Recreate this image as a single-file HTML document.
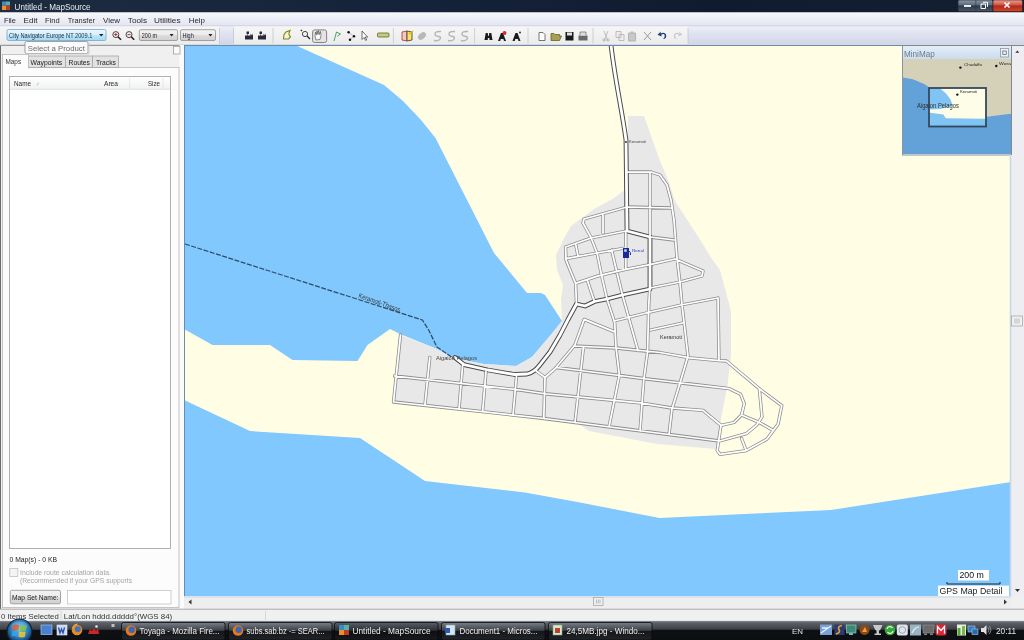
<!DOCTYPE html>
<html><head><meta charset="utf-8">
<style>
*{margin:0;padding:0}
html,body{width:1024px;height:640px;overflow:hidden;background:#f0f0f0}
svg{display:block;filter:blur(0.35px);font-family:"Liberation Sans",sans-serif}
</style></head><body>
<svg width="1024" height="640" viewBox="0 0 1024 640">
<rect width="1024" height="640" fill="#f0f0f0"/>
<defs><clipPath id="mc"><rect x="184" y="45" width="827" height="551"/></clipPath></defs>
<g clip-path="url(#mc)">
<rect x="184" y="45" width="827" height="551" fill="#80c8fe" />
<polygon points="295,45 1011,45 1011,482 831,510 659.5,518 580,502.5 525,492.5 425,481 360,438 250,431 184,400 184,329 212.5,345 270,345 292.5,360 357.5,361 367.5,345 390,329 400,334 437,349 453,358 484,364 516,366 532,357 552,333.5 562,321 545,295 541,293 527,293 494,253 435.5,138 421,120 403,101 384,85" fill="#fffee5"/>
<polygon points="628,116 644,116 660,161 667,177 675,201 699,238 712,259 720,270 731,311 731,356 727.5,385 721,418.7 718,447 716,449 657,444 589,431 579,424 540,418 393.5,402 400.5,335 437,349 453,358 484,364 516,366 532,357 552,333.5 562,321 561,300 563,285 557,270 556,255 563,240 571,226 594,209 613.7,198.3 624.4,190.3 628,190" fill="#e8e8e8"/>
<path d="M185,244 L422.4,320 L428.7,330 L436.9,346.9 L455.6,359.8" fill="none" stroke="#2c4a68" stroke-width="1.2" stroke-dasharray="5,1.5"/>
<g fill="none" stroke-linejoin="round" stroke-linecap="round">
<path d="M627,172 L651,172 L660,175 L667,185 L671,200 L674,220 L677,258 L680,283 L682,305 L684,322 L688,356 L680,383 L672,409 L669,434.5 M650,172 L650,237 M671,208 L627,207 L584,219 L583,223 L591,237.5 L597,253 L601.5,275 L607,299 L614.7,322.5 L616,347.5 L619.4,375 L609,427 M603,215 L603,233 M626,231 L591,238 L565.6,247 L566,260 L575.6,283.4 L576.5,304 M575.8,245 L578,256 M566,258.6 L597,253 L625,248 M611.6,250 L618.75,280 L622.5,295.2 L628.75,317.8 L638,350.6 M575.6,283.4 L599,275.6 L625.6,269.4 L649.8,264.7 L675,259 L703,271 L702,276 L680,282 L650,288 M625.8,231 L625.8,269 M650,237 L674,240 M587.3,280.3 L594.4,301.4 M614,321 L646,313 L681,305 L718,298 L719,360.6 M650.6,330 L682.5,323 M649.8,288 L648.75,305 L647.5,352.5 L643.75,380 L640,431 M574,346 L616,348 L660,352.5 L690,357.8 L719,360.6 L726.5,361 L759.3,388.7 L781.8,405.6 L778,424.3 L766.8,439.3 L746.2,450.6 L720,454.3 L717.2,450.6 L721,425.3 M394.7,376 L520,390 L545,393.75 L640,402.8 L671.9,408 L690,409.3 L703,410.3 L710.6,416.8 L721,425.3 L734,422.5 L741.5,415 L744.3,403.7 L740.6,394.3 L729.4,388.7 L690,384 L645,378.75 L616,375 L556,367.5 M393.5,402 L540,418 L719.7,441 L746.2,433.7 L756.5,425.3 L762,416.8 L759.3,388.7 M741.5,415 L759.3,422.5 L772.5,430 M741.5,438.4 L746.2,450.6 M400.5,335 L393.5,402 M429.8,357.4 L425,404.3 M462.6,365.6 L459,409 M486,371.5 L482.6,411.7 M516.5,376 L513,415 M535,370 L545,377.5 L543.75,418.5 M583.4,347.5 L575,422.5 M584.2,319.4 L614.7,331.9 M584.2,319.4 L574.8,345.2 L555,368.75 L545,377.5" stroke="#8e8e8e" stroke-width="3.3"/>
<path d="M611,45 C615,80 622,110 626,140 L627,231 L650,237 L650,289 L622.5,295 L607,299 L594.5,301.5 L585,306 L576.5,304 L568,319.5 L560,335 L550,352 L539,366 C535,371 532,373 527,374 L514.5,374.5 L488,370 L464,364.6 L455,357.5" stroke="#4a4a4a" stroke-width="4.8"/>
<path d="M627,172 L651,172 L660,175 L667,185 L671,200 L674,220 L677,258 L680,283 L682,305 L684,322 L688,356 L680,383 L672,409 L669,434.5 M650,172 L650,237 M671,208 L627,207 L584,219 L583,223 L591,237.5 L597,253 L601.5,275 L607,299 L614.7,322.5 L616,347.5 L619.4,375 L609,427 M603,215 L603,233 M626,231 L591,238 L565.6,247 L566,260 L575.6,283.4 L576.5,304 M575.8,245 L578,256 M566,258.6 L597,253 L625,248 M611.6,250 L618.75,280 L622.5,295.2 L628.75,317.8 L638,350.6 M575.6,283.4 L599,275.6 L625.6,269.4 L649.8,264.7 L675,259 L703,271 L702,276 L680,282 L650,288 M625.8,231 L625.8,269 M650,237 L674,240 M587.3,280.3 L594.4,301.4 M614,321 L646,313 L681,305 L718,298 L719,360.6 M650.6,330 L682.5,323 M649.8,288 L648.75,305 L647.5,352.5 L643.75,380 L640,431 M574,346 L616,348 L660,352.5 L690,357.8 L719,360.6 L726.5,361 L759.3,388.7 L781.8,405.6 L778,424.3 L766.8,439.3 L746.2,450.6 L720,454.3 L717.2,450.6 L721,425.3 M394.7,376 L520,390 L545,393.75 L640,402.8 L671.9,408 L690,409.3 L703,410.3 L710.6,416.8 L721,425.3 L734,422.5 L741.5,415 L744.3,403.7 L740.6,394.3 L729.4,388.7 L690,384 L645,378.75 L616,375 L556,367.5 M393.5,402 L540,418 L719.7,441 L746.2,433.7 L756.5,425.3 L762,416.8 L759.3,388.7 M741.5,415 L759.3,422.5 L772.5,430 M741.5,438.4 L746.2,450.6 M400.5,335 L393.5,402 M429.8,357.4 L425,404.3 M462.6,365.6 L459,409 M486,371.5 L482.6,411.7 M516.5,376 L513,415 M535,370 L545,377.5 L543.75,418.5 M583.4,347.5 L575,422.5 M584.2,319.4 L614.7,331.9 M584.2,319.4 L574.8,345.2 L555,368.75 L545,377.5" stroke="#fff" stroke-width="1.75"/>
<path d="M611,45 C615,80 622,110 626,140 L627,231 L650,237 L650,289 L622.5,295 L607,299 L594.5,301.5 L585,306 L576.5,304 L568,319.5 L560,335 L550,352 L539,366 C535,371 532,373 527,374 L514.5,374.5 L488,370 L464,364.6 L455,357.5" stroke="#fff" stroke-width="2.8"/>
</g>
<text x="358" y="297.5" font-size="7" fill="#3a3a3a" font-weight="normal" textLength="44" lengthAdjust="spacingAndGlyphs" transform="rotate(19.5 358 297.5)">Keramoti-Thasos</text>
<text x="436" y="359.5" font-size="6" fill="#444" font-weight="normal" textLength="41" lengthAdjust="spacingAndGlyphs" >Aigaion Pelagos</text>
<text x="660" y="339" font-size="6" fill="#333" font-weight="normal" textLength="22" lengthAdjust="spacingAndGlyphs" >Keramoti</text>
<text x="629" y="143" font-size="4" fill="#444" font-weight="normal" textLength="17" lengthAdjust="spacingAndGlyphs" >Keramoti</text>
<circle cx="626" cy="142" r="0.9" fill="#222"/>
<text x="632" y="252" font-size="4" fill="#3040c0" font-weight="normal" textLength="12" lengthAdjust="spacingAndGlyphs" >Renal</text>
<path d="M623,248 h6 v10 h-6 z" fill="#1a2a9a"/><rect x="624.2" y="249.3" width="2.5" height="2.5" fill="#cde"/><path d="M629,251 q2,1 1.5,4" stroke="#1a2a9a" stroke-width="1" fill="none"/>
</g>
<path d="M184.5,45.5 V596.5 M184,45.5 H1011" stroke="#6a8cae" stroke-width="1"/>
<rect x="958" y="570" width="31" height="10.5" fill="#fff" />
<text x="959.4" y="578.1" font-size="8.6" fill="#111" font-weight="normal" textLength="24.4" lengthAdjust="spacingAndGlyphs" >200 m</text>
<path d="M947,582 V584 H1000 V582" fill="none" stroke="#222" stroke-width="1"/>
<rect x="938" y="585.6" width="71" height="10.5" fill="#fff" />
<text x="939.4" y="593.8" font-size="8.5" fill="#222" font-weight="normal" textLength="63" lengthAdjust="spacingAndGlyphs" >GPS Map Detail</text>
<rect x="902.5" y="45.5" width="109" height="109.5" fill="#f4f6f8" stroke="#8a949e" stroke-width="1" />
<defs><linearGradient id="mmt" x1="0" y1="0" x2="0" y2="1"><stop offset="0" stop-color="#e4eef8"/><stop offset="1" stop-color="#cbdcec"/></linearGradient></defs>
<rect x="903" y="46" width="108" height="13" fill="url(#mmt)" />
<text x="904" y="56.5" font-size="8.6" fill="#6c7c8e" font-weight="normal" textLength="30.7" lengthAdjust="spacingAndGlyphs" >MiniMap</text>
<rect x="1000.5" y="48.5" width="8" height="8.5" fill="#eef2f6" stroke="#8898a8" stroke-width="0.8" />
<rect x="1002.8" y="51" width="3.4" height="3.4" fill="none" stroke="#556" stroke-width="0.7" />
<defs><clipPath id="mmc"><rect x="903" y="59" width="108" height="95"/></clipPath></defs>
<g clip-path="url(#mmc)">
<rect x="903" y="59" width="108" height="95" fill="#62a2d8" />
<polygon points="903,59 1011,59 1011,113.8 996.6,115.4 985.3,117 945,118.6 942.7,114.6 930,113.8 929,87.2 924.2,84 912.9,79.2 903,77.5" fill="#d5d1b8"/>
<rect x="929" y="88" width="57" height="38" fill="#80c4f4" />
<polygon points="939.5,88 986,88 986,118.7 945.8,118.3 943.4,114.4 930,112.8 929,109.5 940,108.9 952.8,105.8 950.5,99.5 945.8,93.3" fill="#fdfde8"/>
</g>
<rect x="929" y="88" width="57" height="38.5" fill="none" stroke="#34485c" stroke-width="1.8" />
<circle cx="960.4" cy="67.6" r="1.2" fill="#111"/>
<text x="964" y="66" font-size="4" fill="#222" font-weight="normal" textLength="18" lengthAdjust="spacingAndGlyphs" >Chudaffo</text>
<circle cx="996.3" cy="66" r="1.2" fill="#111"/>
<text x="999" y="65" font-size="4" fill="#222" font-weight="normal" textLength="12" lengthAdjust="spacingAndGlyphs" >Wora</text>
<circle cx="957.3" cy="94.6" r="1.2" fill="#111"/>
<text x="960" y="93" font-size="4" fill="#222" font-weight="normal" textLength="17" lengthAdjust="spacingAndGlyphs" >Keramoti</text>
<text x="917" y="108" font-size="7" fill="#303030" font-weight="normal" textLength="41.8" lengthAdjust="spacingAndGlyphs" >Aigaion Pelagos</text>
<rect x="1011" y="45" width="13" height="552" fill="#eeedf2" />
<path d="M1010.5,155 V597" stroke="#c6d6e6" stroke-width="1.5"/>
<path d="M1015.3,52.8 l2,-2.4 l2,2.4 z" fill="#333"/>
<path d="M1011.5,45.5 V155 M902.5,45.5 H1024" stroke="#808890" stroke-width="1"/>
<path d="M1015,589 l2.5,3 l2.5,-3 z" fill="#333"/>
<rect x="1011.5" y="316" width="11" height="10" fill="#f0f0f0" stroke="#a8a8a8" stroke-width="0.8" />
<path d="M1015,318.5 v5 M1017,318.5 v5 M1019,318.5 v5" stroke="#999" stroke-width="0.6"/>
<rect x="184" y="596.5" width="827" height="12" fill="#eeeeee" />
<path d="M184,597 H1011" stroke="#c6d6e6" stroke-width="1"/>
<path d="M191.5,599.5 l-3,2.5 l3,2.5 z" fill="#333"/>
<path d="M1004,599.5 l3,2.5 l-3,2.5 z" fill="#333"/>
<rect x="593.5" y="597.5" width="9.5" height="8" fill="#f0f0f0" stroke="#a8a8a8" stroke-width="0.8" />
<path d="M596.5,599.5 v4 M598.3,599.5 v4 M600,599.5 v4" stroke="#999" stroke-width="0.6"/>
<defs><linearGradient id="tg" x1="0" y1="0" x2="1" y2="0"><stop offset="0" stop-color="#1e2c40"/><stop offset="0.4" stop-color="#15233a"/><stop offset="0.7" stop-color="#0f1b2e"/><stop offset="1" stop-color="#142032"/></linearGradient></defs>
<rect x="0" y="0" width="1024" height="12.5" fill="url(#tg)" />
<rect x="2" y="1.5" width="4" height="4" fill="#3a8ac8" />
<rect x="6" y="1.5" width="4" height="4" fill="#58b0a8" />
<rect x="2" y="5.5" width="4" height="4.5" fill="#e89030" />
<rect x="6" y="5.5" width="4" height="4.5" fill="#c03a28" />
<text x="14.6" y="9.7" font-size="8.5" fill="#e6eaf2" font-weight="normal" textLength="76" lengthAdjust="spacingAndGlyphs" >Untitled - MapSource</text>
<defs><linearGradient id="wb" x1="0" y1="0" x2="0" y2="1"><stop offset="0" stop-color="#8a96a4"/><stop offset="0.45" stop-color="#5a6878"/><stop offset="0.5" stop-color="#2a3848"/><stop offset="1" stop-color="#4a5868"/></linearGradient><linearGradient id="cb" x1="0" y1="0" x2="0" y2="1"><stop offset="0" stop-color="#e8a090"/><stop offset="0.45" stop-color="#d05040"/><stop offset="0.5" stop-color="#b02818"/><stop offset="1" stop-color="#d04830"/></linearGradient></defs>
<rect x="958" y="0" width="35" height="11.5" fill="url(#wb)" stroke="#1a2430" stroke-width="0.6" rx="1.5" />
<path d="M975.8,0 V11.5" stroke="#2a3440" stroke-width="0.6"/>
<rect x="993" y="0" width="29.5" height="11.5" fill="url(#cb)" stroke="#3a1a18" stroke-width="0.6" rx="1.5" />
<path d="M964,6 h7" stroke="#fff" stroke-width="1.8"/>
<path d="M981,4 h4.5 v4.5 h-4.5 z M983,2.3 h4.5 v4.5" fill="none" stroke="#fff" stroke-width="1"/>
<path d="M1004.5,2.5 l5,5 M1009.5,2.5 l-5,5" stroke="#fff" stroke-width="1.6"/>
<defs><linearGradient id="mg" x1="0" y1="0" x2="0" y2="1"><stop offset="0" stop-color="#f8f9fc"/><stop offset="0.5" stop-color="#eceef7"/><stop offset="1" stop-color="#e2e5f1"/></linearGradient></defs>
<rect x="0" y="12.5" width="1024" height="13.5" fill="url(#mg)" />
<path d="M0,26 H1024" stroke="#c8cad4" stroke-width="1"/>
<text x="3.9" y="22.6" font-size="8" fill="#2a2a2a" font-weight="normal" textLength="12" lengthAdjust="spacingAndGlyphs" >File</text>
<text x="23.6" y="22.6" font-size="8" fill="#2a2a2a" font-weight="normal" textLength="14" lengthAdjust="spacingAndGlyphs" >Edit</text>
<text x="45" y="22.6" font-size="8" fill="#2a2a2a" font-weight="normal" textLength="14.7" lengthAdjust="spacingAndGlyphs" >Find</text>
<text x="67.7" y="22.6" font-size="8" fill="#2a2a2a" font-weight="normal" textLength="27.3" lengthAdjust="spacingAndGlyphs" >Transfer</text>
<text x="103" y="22.6" font-size="8" fill="#2a2a2a" font-weight="normal" textLength="17" lengthAdjust="spacingAndGlyphs" >View</text>
<text x="127.8" y="22.6" font-size="8" fill="#2a2a2a" font-weight="normal" textLength="19.2" lengthAdjust="spacingAndGlyphs" >Tools</text>
<text x="154" y="22.6" font-size="8" fill="#2a2a2a" font-weight="normal" textLength="26.5" lengthAdjust="spacingAndGlyphs" >Utilities</text>
<text x="188.7" y="22.6" font-size="8" fill="#2a2a2a" font-weight="normal" textLength="16.3" lengthAdjust="spacingAndGlyphs" >Help</text>
<defs><linearGradient id="tbg" x1="0" y1="0" x2="0" y2="1"><stop offset="0" stop-color="#f6f6f6"/><stop offset="1" stop-color="#ebebeb"/></linearGradient><linearGradient id="tbb" x1="0" y1="0" x2="0" y2="1"><stop offset="0" stop-color="#eef0f8"/><stop offset="0.3" stop-color="#e2e5f2"/><stop offset="1" stop-color="#d0d5e7"/></linearGradient></defs>
<rect x="0" y="26.5" width="1024" height="18.5" fill="url(#tbb)" />
<rect x="0" y="26.5" width="219.5" height="18.5" fill="url(#tbg)" />
<rect x="234" y="26.5" width="454" height="18.5" fill="url(#tbg)" />
<path d="M0,44.5 H1024" stroke="#d4d8e0" stroke-width="1"/>
<path d="M219.5,28 V43.5" stroke="#c4c6cc" stroke-width="0.8"/>
<path d="M233.5,28 V43.5" stroke="#c4c6cc" stroke-width="0.8"/>
<path d="M273,28 V43.5" stroke="#c4c6cc" stroke-width="0.8"/>
<path d="M393.4,28 V43.5" stroke="#c4c6cc" stroke-width="0.8"/>
<path d="M474.6,28 V43.5" stroke="#c4c6cc" stroke-width="0.8"/>
<path d="M528,28 V43.5" stroke="#c4c6cc" stroke-width="0.8"/>
<path d="M593,28 V43.5" stroke="#c4c6cc" stroke-width="0.8"/>
<path d="M688,28 V43.5" stroke="#c4c6cc" stroke-width="0.8"/>
<defs><linearGradient id="cbx" x1="0" y1="0" x2="0" y2="1"><stop offset="0" stop-color="#eaf6fd"/><stop offset="0.5" stop-color="#d7effc"/><stop offset="0.51" stop-color="#bde6fd"/><stop offset="1" stop-color="#a6d9f4"/></linearGradient><linearGradient id="gcb" x1="0" y1="0" x2="0" y2="1"><stop offset="0" stop-color="#f2f2f2"/><stop offset="0.5" stop-color="#ebebeb"/><stop offset="0.51" stop-color="#dddddd"/><stop offset="1" stop-color="#cfcfcf"/></linearGradient></defs>
<rect x="7" y="29.5" width="99" height="11" fill="url(#cbx)" stroke="#70a8d0" stroke-width="0.8" rx="1.5" />
<text x="9.1" y="38" font-size="7" fill="#1a2a3a" font-weight="normal" textLength="83.3" lengthAdjust="spacingAndGlyphs" >City Navigator Europe NT 2009.1</text>
<path d="M99,34 h4.5 l-2.25,2.6 z" fill="#222"/>
<circle cx="115.8" cy="34.6" r="3" fill="#f4f0f0" stroke="#444" stroke-width="1"/>
<path d="M118.0,36.8 l3,3" stroke="#222" stroke-width="1.6"/>
<path d="M114.2,34.6 h3.2" stroke="#b02020" stroke-width="0.9"/>
<circle cx="129" cy="34.6" r="3" fill="#f4f0f0" stroke="#444" stroke-width="1"/>
<path d="M131.2,36.8 l3,3" stroke="#222" stroke-width="1.6"/>
<path d="M127.4,34.6 h3.2" stroke="#b02020" stroke-width="0.9"/>
<path d="M115.8,33 v3.2" stroke="#b02020" stroke-width="0.9"/>
<rect x="139.3" y="29.7" width="38.3" height="10.8" fill="url(#gcb)" stroke="#8e8f8f" stroke-width="0.8" rx="1.5" />
<text x="141.8" y="37.5" font-size="7" fill="#222" font-weight="normal" textLength="15.2" lengthAdjust="spacingAndGlyphs" >200 m</text>
<path d="M169.6,34 h4 l-2,2.4 z" fill="#222"/>
<rect x="180.5" y="29.7" width="35" height="10.8" fill="url(#gcb)" stroke="#8e8f8f" stroke-width="0.8" rx="1.5" />
<text x="182.4" y="37.5" font-size="7" fill="#223" font-weight="normal" textLength="11.4" lengthAdjust="spacingAndGlyphs" >High</text>
<path d="M208.4,34 h4 l-2,2.4 z" fill="#222"/>
<path d="M245,39.5 v-4 h2.5 v-1.5 h-1 v-2.5 h2.5 v2.5 h-1 v1.5 h2.5 v-2 l1.5,2 l1,-2 v6 z" fill="#2a2a38"/>
<path d="M258,39.5 v-4 h2.5 v-1.5 h-1 v-2.5 h2.5 v2.5 h-1 v1.5 h2.5 v-2 l1.5,2 l1,-2 v6 z" fill="#2a2a38"/>
<path d="M283.5,39 l0.5,-4.5 l2,-2.5 l4,-1.5 l-1,2.5 l0,1.5 l1.5,2.5 l-2,2 z" fill="#f6f2d6" stroke="#7a8a10" stroke-width="1.1"/>
<circle cx="305" cy="34" r="2.6" fill="none" stroke="#333" stroke-width="0.9"/><path d="M302,31 l-1.2,-1.2 M307,36 l3,3" stroke="#222" stroke-width="1.2"/>
<rect x="312.6" y="29.9" width="14" height="12.6" fill="#e4e4e4" stroke="#777" stroke-width="0.9" rx="2" />
<path d="M316,40 l-1,-4 l0.5,-4 l1,3 l0.5,-4 l1,3.5 l0.5,-4 l1,4 l1,-3 l0.5,4 l-1,4 z" fill="#fafafa" stroke="#444" stroke-width="0.6"/>
<path d="M334,41 l2.5,-9 M336.5,32 l4,2 l-3.2,2.2" fill="none" stroke="#3a9a50" stroke-width="0.9"/>
<path d="M348.6,32.3 L354,36.3 L350,39.7" fill="none" stroke="#c0a0c0" stroke-width="0.8"/><circle cx="348.6" cy="32.3" r="1.2" fill="#111"/><circle cx="354" cy="36.3" r="1.2" fill="#111"/><circle cx="350" cy="39.7" r="1.2" fill="#111"/>
<path d="M362,31 v8.5 l2,-2 l1.7,3 l1,-0.6 l-1.5,-2.8 l2.5,0 z" fill="#fff" stroke="#333" stroke-width="0.7"/>
<rect x="377.5" y="33" width="11.5" height="4" fill="#c4cc88" stroke="#6a7428" stroke-width="0.9" rx="1" />
<path d="M402,32 l5,-1 l0,10 l-5,-1 z" fill="#f4c8c0" stroke="#a03030" stroke-width="0.8"/><path d="M407,31 l5,1 l0,8 l-5,1 z" fill="#ffe060" stroke="#333" stroke-width="0.8"/><path d="M409,34 l4,-3" stroke="#d0c020" stroke-width="1.5"/>
<ellipse cx="422" cy="36" rx="4.5" ry="3" transform="rotate(-40 422 36)" fill="#b8b8b8"/>
<path d="M441,31.5 q-6,-0.5 -6,2.5 q0,2 4,2.5 q3,1 0,3.5 q-2,1.5 -5,0.5" fill="none" stroke="#b4b4b4" stroke-width="1.4"/>
<path d="M455,31.5 q-6,-0.5 -6,2.5 q0,2 4,2.5 q3,1 0,3.5 q-2,1.5 -5,0.5" fill="none" stroke="#b4b4b4" stroke-width="1.4"/>
<path d="M468,31.5 q-6,-0.5 -6,2.5 q0,2 4,2.5 q3,1 0,3.5 q-2,1.5 -5,0.5" fill="none" stroke="#b4b4b4" stroke-width="1.4"/>
<path d="M484.5,40 l1.2,-7 h2 l0.5,3 h0.6 l0.5,-3 h2 l1.2,7 h-3 l-0.2,-2 h-1.4 l-0.2,2 z" fill="#1a1a1a"/>
<path d="M498,41 l3,-8 h2 l3,8 h-2 l-0.6,-2 h-2.6 l-0.6,2 z" fill="#1a1a1a"/><circle cx="504.5" cy="33" r="2" fill="#d03030"/>
<path d="M512.5,41 l3,-8 h2 l3,8 h-2 l-0.6,-2 h-2.6 l-0.6,2 z" fill="#1a1a1a"/><circle cx="520" cy="32.5" r="1" fill="#333"/>
<path d="M539,32.5 h4 l2,2 v6 h-6 z" fill="#fff" stroke="#555" stroke-width="0.8"/>
<path d="M551,40.5 v-7 h3 l1,1 h4.5 v1.5 h2 l-2,4.5 z" fill="#a8a050" stroke="#5a5418" stroke-width="0.7"/>
<rect x="565.5" y="32" width="8" height="8.5" fill="#1a1a1a" />
<rect x="567" y="32.5" width="5" height="3" fill="#e0e0e0" />
<path d="M578.5,40.5 v-5 h9 v5 z" fill="#6a6a6a"/><path d="M580,35.5 v-3.5 h6 v3.5" fill="#ddd" stroke="#555" stroke-width="0.6"/>
<path d="M604,31 l4,10 M608,31 l-4,10" stroke="#b8b8b8" stroke-width="0.9"/><circle cx="604" cy="40" r="1.3" fill="none" stroke="#b0b0b0" stroke-width="0.7"/><circle cx="608" cy="40" r="1.3" fill="none" stroke="#b0b0b0" stroke-width="0.7"/>
<path d="M616,31.5 h5 v6 h-5 z M619,34.5 h5 v6 h-5 z" fill="#eee" stroke="#b0b0b0" stroke-width="0.8"/>
<path d="M628.5,33 h7 v8 h-7 z" fill="#c8c8c8" stroke="#a8a8a8" stroke-width="0.8"/><path d="M630.5,31.5 h3 v2.5 h-3 z" fill="#bbb"/>
<path d="M644,32 l7,8 M651,32 l-7,8" stroke="#9a9a9a" stroke-width="1"/>
<path d="M664,39 q3,-1 2,-4.5 q-1.5,-3 -5.5,-1 l0.5,-2 l-3.5,3.2 l4.2,1.8 l-0.5,-1.8 q3,-1.5 3.5,0.8 q0.5,2 -1.5,3 z" fill="#1e3a78"/>
<path d="M676,39 q-3,-1 -2,-4.5 q1.5,-3 5.5,-1 l-0.5,-2 l3.5,3.2 l-4.2,1.8 l0.5,-1.8 q-3,-1.5 -3.5,0.8 q-0.5,2 1.5,3 z" fill="#c8ccd0"/>
<rect x="0" y="45" width="184" height="565" fill="#f0f0f0" />
<path d="M0.5,45 V609" stroke="#6c6c6c" stroke-width="1"/>
<path d="M0,45.5 H181" stroke="#9a9a9a" stroke-width="1"/>
<rect x="179.5" y="45" width="4.5" height="564" fill="#fbfbfb" />
<rect x="173.5" y="46.5" width="6.5" height="7.5" fill="#fafafa" stroke="#a0a0a0" stroke-width="0.8" />
<rect x="2.5" y="67.5" width="176.5" height="540" fill="#fcfcfc" stroke="#b8b8b8" stroke-width="0.8" />
<rect x="28.5" y="56" width="37" height="11.5" fill="#e2e2e2" stroke="#a6a6a6" stroke-width="0.8" />
<rect x="65.5" y="56" width="27" height="11.5" fill="#e2e2e2" stroke="#a6a6a6" stroke-width="0.8" />
<rect x="92.5" y="56" width="26" height="11.5" fill="#e2e2e2" stroke="#a6a6a6" stroke-width="0.8" />
<rect x="2.5" y="54.5" width="26" height="13.5" fill="#fcfcfc" stroke="#b8b8b8" stroke-width="0.8" />
<rect x="3" y="66" width="25" height="3" fill="#fcfcfc" />
<text x="5.4" y="64" font-size="7" fill="#333" font-weight="normal" textLength="15.7" lengthAdjust="spacingAndGlyphs" >Maps</text>
<text x="30.6" y="65" font-size="7" fill="#222" font-weight="normal" textLength="31.6" lengthAdjust="spacingAndGlyphs" >Waypoints</text>
<text x="68.6" y="65" font-size="7" fill="#222" font-weight="normal" textLength="21.4" lengthAdjust="spacingAndGlyphs" >Routes</text>
<text x="96" y="65" font-size="7" fill="#222" font-weight="normal" textLength="20" lengthAdjust="spacingAndGlyphs" >Tracks</text>
<rect x="9.5" y="76.5" width="161" height="472" fill="#ffffff" stroke="#a8a8a8" stroke-width="0.9" />
<defs><linearGradient id="hdr" x1="0" y1="0" x2="0" y2="1"><stop offset="0" stop-color="#ffffff"/><stop offset="1" stop-color="#f0f1f2"/></linearGradient></defs>
<rect x="10" y="77" width="160" height="12.3" fill="url(#hdr)" />
<path d="M10,89.3 H170" stroke="#d8dadc" stroke-width="0.8"/>
<path d="M129.6,78 V89 M163,78 V89" stroke="#e0e2e4" stroke-width="0.8"/>
<text x="14" y="86.2" font-size="7" fill="#2a2a2a" font-weight="normal" textLength="17" lengthAdjust="spacingAndGlyphs" >Name</text>
<path d="M37,85.5 l1.5,-3" stroke="#aaa" stroke-width="0.7"/>
<text x="104" y="86.2" font-size="7" fill="#2a2a2a" font-weight="normal" textLength="14" lengthAdjust="spacingAndGlyphs" >Area</text>
<text x="148" y="86.2" font-size="7" fill="#2a2a2a" font-weight="normal" textLength="12" lengthAdjust="spacingAndGlyphs" >Size</text>
<text x="9.5" y="561.5" font-size="7" fill="#222" font-weight="normal" textLength="47.5" lengthAdjust="spacingAndGlyphs" >0 Map(s) - 0 KB</text>
<rect x="9.8" y="568.6" width="8" height="8" fill="#f4f4f4" stroke="#c0c0c0" stroke-width="0.8" />
<text x="20" y="574.5" font-size="7" fill="#a4a4a4" font-weight="normal" textLength="91" lengthAdjust="spacingAndGlyphs" >Include route calculation data.</text>
<text x="20" y="583" font-size="7" fill="#a4a4a4" font-weight="normal" textLength="112" lengthAdjust="spacingAndGlyphs" >(Recommended if your GPS supports</text>
<rect x="10.3" y="590.3" width="50.2" height="13.5" fill="url(#gcb)" stroke="#909090" stroke-width="0.8" rx="1.5" />
<text x="12" y="600" font-size="7" fill="#222" font-weight="normal" textLength="46.5" lengthAdjust="spacingAndGlyphs" >Map Set Name:</text>
<rect x="67.5" y="590.5" width="103.5" height="13.5" fill="#fff" stroke="#c4c4c4" stroke-width="0.8" />
<rect x="25" y="41.5" width="63" height="12" fill="#fbfbfb" stroke="#8a8a8a" stroke-width="0.8" rx="1.5" />
<path d="M26,54 H89 V42.5" fill="none" stroke="#cfcfcf" stroke-width="1"/>
<text x="27.7" y="50.6" font-size="8" fill="#6a6a6a" font-weight="normal" textLength="57.2" lengthAdjust="spacingAndGlyphs" >Select a Product</text>
<rect x="0" y="609" width="1024" height="12" fill="#f0f0f0" />
<path d="M0,609.2 H1024" stroke="#a8a8a8" stroke-width="1"/>
<text x="1" y="618.5" font-size="8" fill="#333" font-weight="normal" textLength="57.7" lengthAdjust="spacingAndGlyphs" >0 Items Selected</text>
<text x="63.8" y="618.5" font-size="8" fill="#333" font-weight="normal" textLength="108.4" lengthAdjust="spacingAndGlyphs" >Lat/Lon hddd.ddddd°(WGS 84)</text>
<path d="M61,610.5 V620 M265.5,610.5 V620" stroke="#d0d0d0" stroke-width="0.8"/>
<defs><linearGradient id="tk" x1="0" y1="0" x2="0" y2="1"><stop offset="0" stop-color="#7a7e84"/><stop offset="0.1" stop-color="#5c6066"/><stop offset="0.44" stop-color="#3c4046"/><stop offset="0.47" stop-color="#0e1014"/><stop offset="1" stop-color="#0c0e12"/></linearGradient><linearGradient id="tbt" x1="0" y1="0" x2="0" y2="1"><stop offset="0" stop-color="#7a8088"/><stop offset="0.45" stop-color="#3c4046"/><stop offset="0.5" stop-color="#14161a"/><stop offset="1" stop-color="#202428"/></linearGradient><linearGradient id="tba" x1="0" y1="0" x2="0" y2="1"><stop offset="0" stop-color="#5a6068"/><stop offset="0.45" stop-color="#2a2e34"/><stop offset="0.5" stop-color="#0c0e10"/><stop offset="1" stop-color="#181a1e"/></linearGradient><radialGradient id="orb" cx="0.5" cy="0.4" r="0.6"><stop offset="0" stop-color="#7ac8f0"/><stop offset="0.6" stop-color="#2a78b8"/><stop offset="1" stop-color="#0a2a50"/></radialGradient></defs>
<rect x="0" y="621" width="1024" height="19" fill="url(#tk)" />
<path d="M0,621.3 H1024" stroke="#8a9098" stroke-width="0.6"/>
<circle cx="19.5" cy="631.5" r="12.5" fill="url(#orb)" stroke="#10202c" stroke-width="1.2"/>
<ellipse cx="19.5" cy="626" rx="8" ry="4.5" fill="#ffffff" opacity="0.18"/>
<g opacity="0.82" transform="translate(19.5 631) scale(0.88) translate(-19.5 -631)"><path d="M12,624.5 q3,-1.5 7,0 l-0.8,6 q-3.5,-1.5 -7,0 z" fill="#e8582a"/><path d="M20,624.5 q3.5,1.5 7.5,0 l-0.8,6 q-3.5,1.5 -7.5,0 z" fill="#7ac83a"/><path d="M11,631.5 q3.5,-1.5 7,0 l-0.8,6 q-3.5,-1.5 -7,0 z" fill="#3aa0e8"/><path d="M19,631.5 q3.5,1.5 7.5,0 l-0.8,6 q-3.5,1.5 -7.5,0 z" fill="#f8c828"/></g>
<rect x="41" y="625" width="11" height="9.5" fill="#4a80d0" stroke="#90b8e8" stroke-width="0.8" />
<rect x="57" y="625" width="10" height="10" fill="#c8d8f0" stroke="#e8f0ff" stroke-width="0.6" />
<path d="M58.5,627.5 l1.5,5.5 l1.5,-4 l1.5,4 l1.5,-5.5" fill="none" stroke="#2a4aa0" stroke-width="1.3"/>
<circle cx="77" cy="630" r="5.3" fill="#e88a20"/><circle cx="77.8" cy="629.2" r="3" fill="#4a70b8"/><path d="M72.5,628 q1,-4 5,-4" stroke="#f0c050" stroke-width="1" fill="none"/>
<path d="M88,634 l2,-5 l2,2 l2,-3 l2,3 l2,-3 l1,6 z" fill="#c82828"/><circle cx="96.5" cy="626.5" r="1.3" fill="#e8e8e8"/>
<rect x="111.5" y="624" width="3" height="3" fill="#c0c0c0" />
<rect x="121.5" y="622.5" width="103.5" height="17.5" fill="url(#tbt)" stroke="#0a0a0c" stroke-width="0.8" rx="2" />
<circle cx="131" cy="630.5" r="5.3" fill="#e87818"/><circle cx="131.7" cy="629.7" r="3.2" fill="#3a68b8"/>
<text x="139.5" y="633.5" font-size="8.3" fill="#ececec" font-weight="normal" textLength="80" lengthAdjust="spacingAndGlyphs" >Toyaga - Mozilla Fire...</text>
<rect x="228.5" y="622.5" width="103.5" height="17.5" fill="url(#tbt)" stroke="#0a0a0c" stroke-width="0.8" rx="2" />
<circle cx="238" cy="630.5" r="5.3" fill="#e87818"/><circle cx="238.7" cy="629.7" r="3.2" fill="#3a68b8"/>
<text x="246.5" y="633.5" font-size="8.3" fill="#ececec" font-weight="normal" textLength="78" lengthAdjust="spacingAndGlyphs" >subs.sab.bz -= SEAR...</text>
<rect x="334.5" y="622.5" width="103.5" height="17.5" fill="url(#tba)" stroke="#0a0a0c" stroke-width="0.8" rx="2" />
<rect x="339" y="625" width="5" height="5" fill="#3a8ac8"/><rect x="344" y="625" width="5" height="5" fill="#58b0a8"/><rect x="339" y="630" width="5" height="5" fill="#e89030"/><rect x="344" y="630" width="5" height="5" fill="#c03a28"/>
<text x="352.5" y="633.5" font-size="8.3" fill="#ececec" font-weight="normal" textLength="78" lengthAdjust="spacingAndGlyphs" >Untitled - MapSource</text>
<rect x="441.5" y="622.5" width="103.5" height="17.5" fill="url(#tbt)" stroke="#0a0a0c" stroke-width="0.8" rx="2" />
<rect x="446" y="625" width="9" height="10" fill="#d8e4f4" stroke="#8aa" stroke-width="0.6"/><rect x="445" y="628" width="5" height="5" fill="#2a5ab0"/>
<text x="459.5" y="633.5" font-size="8.3" fill="#ececec" font-weight="normal" textLength="78" lengthAdjust="spacingAndGlyphs" >Document1 - Micros...</text>
<rect x="548.5" y="622.5" width="103.5" height="17.5" fill="url(#tbt)" stroke="#0a0a0c" stroke-width="0.8" rx="2" />
<rect x="553" y="625" width="9" height="10" fill="#d8e8c8" stroke="#8a8" stroke-width="0.6"/><rect x="555" y="628" width="5" height="5" fill="#c04030"/>
<text x="566.5" y="633.5" font-size="8.3" fill="#ececec" font-weight="normal" textLength="78" lengthAdjust="spacingAndGlyphs" >24,5MB.jpg - Windo...</text>
<text x="792" y="633.5" font-size="8" fill="#e0e0e0" font-weight="normal" textLength="11" lengthAdjust="spacingAndGlyphs" >EN</text>
<rect x="820" y="624.5" width="12" height="10.5" fill="#7aa0d8"/><path d="M821,633 l10,-7 M822,628 h6" stroke="#e8f0ff" stroke-width="1.3"/>
<rect x="834.5" y="624.5" width="10" height="10.5" fill="#283a78"/><path d="M842,625.5 q-5,1 -3,4 q2,3 -3,4.5" fill="none" stroke="#f0a020" stroke-width="1.6"/>
<rect x="846.5" y="625" width="9.5" height="8" fill="#3a8a78" stroke="#a8d8c8" stroke-width="0.6"/><rect x="849" y="633" width="4" height="2" fill="#8ab"/>
<circle cx="864.5" cy="630" r="5" fill="#8a4a18"/><path d="M862,632 l3,-5 l2,5 z" fill="#f0a040"/>
<path d="M873,625 h9.5 l-2,4.5 q-2.75,3 -5.5,0 z M876.5,631 h2.5 v2.5 h2 v1.5 h-6.5 v-1.5 h2 z" fill="#c8c8c8"/>
<circle cx="890" cy="630" r="5.3" fill="#38a838"/><path d="M887,629 a3,3 0 0 1 5.5,-1 M893,631 a3,3 0 0 1 -5.5,1" fill="none" stroke="#e8ffe8" stroke-width="1.2"/>
<rect x="896.8" y="624.5" width="11" height="11" rx="2" fill="#dfe4ea"/><circle cx="902.3" cy="630" r="3.3" fill="none" stroke="#9aa8b8" stroke-width="1"/>
<rect x="910" y="624.5" width="11" height="11" fill="#9ab4c4"/><path d="M912,633 q3,-6 7,-6" fill="none" stroke="#e8f4f8" stroke-width="1.2"/>
<rect x="923" y="625" width="11" height="8" fill="#6a6a6a" stroke="#9a9a9a" stroke-width="0.6"/><rect x="924" y="633.5" width="3" height="1.5" fill="#888"/><rect x="930" y="633.5" width="3" height="1.5" fill="#888"/>
<rect x="935.5" y="624.5" width="11" height="11" rx="2" fill="#d82838"/><path d="M937.5,633.5 v-7 l3.5,4 l3.5,-4 v7" fill="none" stroke="#fff" stroke-width="1.3"/>
<rect x="957" y="624.5" width="9" height="11" fill="#e8f0e0"/><rect x="957.5" y="628" width="3" height="7" fill="#58a830"/><rect x="962" y="626" width="3" height="9" fill="#78b848"/>
<rect x="968" y="626" width="7" height="6" fill="#3a78c0" stroke="#a8d0f0" stroke-width="0.6"/><rect x="972" y="629" width="6" height="5.5" fill="#2a68b0" stroke="#a8d0f0" stroke-width="0.6"/>
<path d="M981,628 h2.5 l3,-3 v10 l-3,-3 h-2.5 z" fill="#e0e0e0"/><path d="M988,627.5 q2,2.5 0,5 M989.5,626 q3,4 0,8" fill="none" stroke="#a0a8a0" stroke-width="0.8"/>
<text x="996" y="634" font-size="8.3" fill="#e8e8e8" font-weight="normal" textLength="20" lengthAdjust="spacingAndGlyphs" >20:11</text>
</svg>
</body></html>
